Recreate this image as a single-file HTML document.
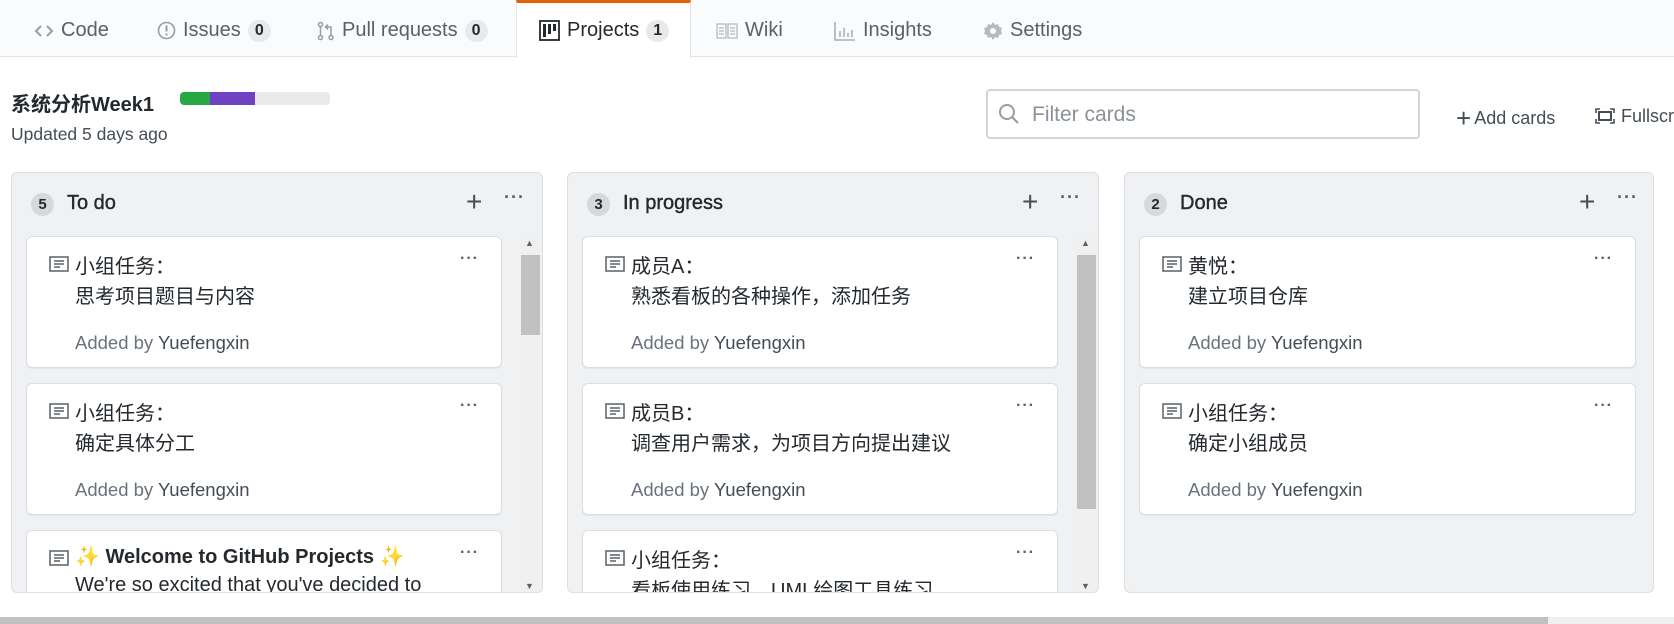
<!DOCTYPE html>
<html><head><meta charset="utf-8"><style>
*{box-sizing:border-box;margin:0;padding:0}
body{width:1674px;height:624px;overflow:hidden;background:#fff;font-family:"Liberation Sans","Noto Sans CJK SC",sans-serif;color:#24292e;position:relative}
.abs{position:absolute}
.tabbar{left:0;top:0;width:1674px;height:57px;background:#fafbfc;border-bottom:1px solid #e1e4e8}
.tab{position:absolute;top:2px;height:57px;display:flex;align-items:center;font-size:20px;color:#586069;white-space:nowrap}
.tab svg{margin-right:7px}
.cnt{display:inline-block;background:#e8e9ea;border-radius:12px;font-size:16px;padding:2px 7px;margin-left:7px;color:#24292e;font-weight:bold}
.ptab{left:516px;top:0;width:175px;height:58px;background:#fff;border:1px solid #e1e4e8;border-top:3px solid #e36209;border-bottom:none;padding-left:22px;color:#24292e}
.col{position:absolute;top:172px;width:532px;height:421px;background:#eff1f3;border:1px solid #dcdfe3;border-radius:6px;overflow:hidden}
.badge{position:absolute;left:19px;top:20px;width:23px;height:23px;border-radius:50%;background:#d6d9dc;font-size:15px;font-weight:bold;text-align:center;line-height:23px;color:#24292e}
.ctitle{position:absolute;left:55px;top:19px;font-size:20px;color:#24292e;-webkit-text-stroke:0.4px #24292e}
.plus{position:absolute;top:16px;font-size:28px;color:#444d56;line-height:26px}
.dots{position:absolute;top:14px;font-size:18px;color:#586069;letter-spacing:1px;font-weight:bold}
.card{position:absolute;left:14px;width:476px;height:132px;background:#fff;border:1px solid #dadde1;border-radius:6px;box-shadow:0 1px 1px rgba(0,0,0,.05)}
.card svg{position:absolute;left:22px;top:19px}
.t1{position:absolute;left:48px;top:13px;font-size:20px;color:#24292e}
.t2{position:absolute;left:48px;top:43px;font-size:20px;color:#24292e}
.by{position:absolute;left:48px;top:95px;font-size:18.5px;color:#6a737d}
.by b{font-weight:normal;color:#444d56}
.cd{position:absolute;right:22px;top:13px;font-size:16px;color:#586069;font-weight:bold;letter-spacing:1px}
.sb{position:absolute;width:21px;top:65px;height:353px;background:#f0f0f0}
.thumb{position:absolute;left:1px;width:19px;background:#c1c1c1}
</style></head><body>
<div class="abs tabbar"></div>
<div class="tab" style="left:34px"><svg width="20" height="16" viewBox="0 0 20 16"><path d="M7 3L2 8l5 5M13 3l5 5-5 5" fill="none" stroke="#959da5" stroke-width="2"/></svg>Code</div>
<div class="tab" style="left:157px"><svg width="19" height="19" viewBox="0 0 19 19"><circle cx="9.5" cy="9.5" r="8" fill="none" stroke="#959da5" stroke-width="1.6"/><path d="M9.5 4.5v6M9.5 12.5v2" stroke="#959da5" stroke-width="2"/></svg>Issues<span class="cnt">0</span></div>
<div class="tab" style="left:317px"><svg width="18" height="20" viewBox="0 0 18 20"><circle cx="3.5" cy="3.5" r="2" fill="none" stroke="#959da5" stroke-width="1.5"/><circle cx="3.5" cy="16.5" r="2" fill="none" stroke="#959da5" stroke-width="1.5"/><circle cx="14" cy="16.5" r="2" fill="none" stroke="#959da5" stroke-width="1.5"/><path d="M3.5 5.5v9M14 14.5V6H9M11 3.5L8.5 6 11 8.5" fill="none" stroke="#959da5" stroke-width="1.5"/></svg>Pull requests<span class="cnt">0</span></div>
<div class="tab ptab"><svg width="21" height="21" viewBox="0 0 21 21"><rect x="1" y="1" width="19" height="19" fill="none" stroke="#24292e" stroke-width="1.8"/><rect x="4" y="4" width="3" height="13" fill="#24292e"/><rect x="9" y="4" width="3" height="10" fill="#24292e"/><rect x="14" y="4" width="3" height="7" fill="#24292e"/></svg>Projects<span class="cnt">1</span></div>
<div class="tab" style="left:716px"><svg width="22" height="16" viewBox="0 0 22 16"><path d="M1 1h9v14H1zM12 1h9v14h-9zM3 5h5M3 8h5M3 11h5M14 5h5M14 8h5M14 11h5" fill="none" stroke="#b5bac0" stroke-width="1.3"/></svg>Wiki</div>
<div class="tab" style="left:834px"><svg width="22" height="20" viewBox="0 0 22 20"><path d="M1 1v18h20M6 16v-6M10 16V7M14 16v-4M18 16V9" fill="none" stroke="#b5bac0" stroke-width="1.8"/></svg>Insights</div>
<div class="tab" style="left:983px"><svg width="20" height="20" viewBox="0 0 20 20"><path d="M10 1l2 3 3-1 1 3 3 1-1 3 1 3-3 1-1 3-3-1-2 3-2-3-3 1-1-3-3-1 1-3-1-3 3-1 1-3 3 1z" fill="#b5bac0"/><circle cx="10" cy="10" r="3" fill="#fafbfc"/></svg>Settings</div>

<div class="abs" style="left:11px;top:88px;font-size:20px;font-weight:bold">系统分析Week1</div>
<div class="abs" style="left:180px;top:92px;width:150px;height:13px;background:#e9eaec;border-radius:4px;overflow:hidden"><div style="position:absolute;left:0;width:30px;height:13px;background:#28a745"></div><div style="position:absolute;left:30px;width:45px;height:13px;background:#6f42c1"></div></div>
<div class="abs" style="left:11px;top:124px;font-size:17.5px;color:#444d56">Updated 5 days ago</div>

<div class="abs" style="left:986px;top:89px;width:434px;height:50px;border:2px solid #d1d5da;border-radius:4px"><svg style="position:absolute;left:10px;top:12px" width="22" height="22" viewBox="0 0 22 22"><circle cx="9" cy="9" r="7" fill="none" stroke="#959da5" stroke-width="2"/><path d="M14 14l6 6" stroke="#959da5" stroke-width="2.2"/></svg><span style="position:absolute;left:44px;top:12px;font-size:21px;color:#8a9199">Filter cards</span></div>
<div class="abs" style="left:1456px;top:103px;font-size:18px;color:#444d56"><span style="font-size:26px;vertical-align:-3px;margin-right:3px">+</span>Add cards</div>
<div class="abs" style="left:1595px;top:106px;font-size:18px;color:#444d56;white-space:nowrap"><svg width="20" height="16" viewBox="0 0 20 16" style="vertical-align:-2px;margin-right:6px"><path d="M1 5V1h4M15 1h4v4M19 11v4h-4M5 15H1v-4" fill="none" stroke="#444d56" stroke-width="1.6"/><rect x="4" y="4" width="12" height="8" fill="none" stroke="#444d56" stroke-width="2"/></svg>Fullscreen</div>

<!-- col 1 -->
<div class="col" style="left:11px">
<div class="badge">5</div><div class="ctitle">To do</div><div class="plus" style="left:454px">+</div><div class="dots" style="left:492px">···</div>
<div class="card" style="top:63px"><svg width="20" height="16" viewBox="0 0 20 16"><rect x="1" y="1" width="18" height="14" fill="none" stroke="#586069" stroke-width="1.5"/><path d="M5 5h10M5 8h10M5 11h6" stroke="#586069" stroke-width="1.5"/></svg><div class="t1">小组任务：</div><div class="t2">思考项目题目与内容</div><div class="by">Added by <b>Yuefengxin</b></div><div class="cd">···</div></div>
<div class="card" style="top:210px"><svg width="20" height="16" viewBox="0 0 20 16"><rect x="1" y="1" width="18" height="14" fill="none" stroke="#586069" stroke-width="1.5"/><path d="M5 5h10M5 8h10M5 11h6" stroke="#586069" stroke-width="1.5"/></svg><div class="t1">小组任务：</div><div class="t2">确定具体分工</div><div class="by">Added by <b>Yuefengxin</b></div><div class="cd">···</div></div>
<div class="card" style="top:357px"><svg width="20" height="16" viewBox="0 0 20 16"><rect x="1" y="1" width="18" height="14" fill="none" stroke="#586069" stroke-width="1.5"/><path d="M5 5h10M5 8h10M5 11h6" stroke="#586069" stroke-width="1.5"/></svg><div class="t1" style="font-weight:bold"><span style="color:#e8b900">✨</span> Welcome to GitHub Projects <span style="color:#e8b900">✨</span></div><div class="t2">We're so excited that you've decided to</div><div class="cd">···</div></div>
<div class="sb" style="left:508px"><div class="thumb" style="top:17px;height:80px"></div><div style="position:absolute;left:5px;top:0;font-size:9px;color:#606060">▲</div><div style="position:absolute;left:5px;bottom:0;font-size:9px;color:#606060">▼</div></div>
</div>

<!-- col 2 -->
<div class="col" style="left:567px">
<div class="badge">3</div><div class="ctitle">In progress</div><div class="plus" style="left:454px">+</div><div class="dots" style="left:492px">···</div>
<div class="card" style="top:63px"><svg width="20" height="16" viewBox="0 0 20 16"><rect x="1" y="1" width="18" height="14" fill="none" stroke="#586069" stroke-width="1.5"/><path d="M5 5h10M5 8h10M5 11h6" stroke="#586069" stroke-width="1.5"/></svg><div class="t1">成员A：</div><div class="t2">熟悉看板的各种操作，添加任务</div><div class="by">Added by <b>Yuefengxin</b></div><div class="cd">···</div></div>
<div class="card" style="top:210px"><svg width="20" height="16" viewBox="0 0 20 16"><rect x="1" y="1" width="18" height="14" fill="none" stroke="#586069" stroke-width="1.5"/><path d="M5 5h10M5 8h10M5 11h6" stroke="#586069" stroke-width="1.5"/></svg><div class="t1">成员B：</div><div class="t2">调查用户需求，为项目方向提出建议</div><div class="by">Added by <b>Yuefengxin</b></div><div class="cd">···</div></div>
<div class="card" style="top:357px"><svg width="20" height="16" viewBox="0 0 20 16"><rect x="1" y="1" width="18" height="14" fill="none" stroke="#586069" stroke-width="1.5"/><path d="M5 5h10M5 8h10M5 11h6" stroke="#586069" stroke-width="1.5"/></svg><div class="t1">小组任务：</div><div class="t2">看板使用练习，UML绘图工具练习</div><div class="cd">···</div></div>
<div class="sb" style="left:508px"><div class="thumb" style="top:17px;height:254px"></div><div style="position:absolute;left:5px;top:0;font-size:9px;color:#606060">▲</div><div style="position:absolute;left:5px;bottom:0;font-size:9px;color:#606060">▼</div></div>
</div>

<!-- col 3 -->
<div class="col" style="left:1124px;width:530px">
<div class="badge">2</div><div class="ctitle">Done</div><div class="plus" style="left:454px">+</div><div class="dots" style="left:492px">···</div>
<div class="card" style="top:63px;width:497px"><svg width="20" height="16" viewBox="0 0 20 16"><rect x="1" y="1" width="18" height="14" fill="none" stroke="#586069" stroke-width="1.5"/><path d="M5 5h10M5 8h10M5 11h6" stroke="#586069" stroke-width="1.5"/></svg><div class="t1">黄悦：</div><div class="t2">建立项目仓库</div><div class="by">Added by <b>Yuefengxin</b></div><div class="cd">···</div></div>
<div class="card" style="top:210px;width:497px"><svg width="20" height="16" viewBox="0 0 20 16"><rect x="1" y="1" width="18" height="14" fill="none" stroke="#586069" stroke-width="1.5"/><path d="M5 5h10M5 8h10M5 11h6" stroke="#586069" stroke-width="1.5"/></svg><div class="t1">小组任务：</div><div class="t2">确定小组成员</div><div class="by">Added by <b>Yuefengxin</b></div><div class="cd">···</div></div>
</div>

<div class="abs" style="left:0;top:617px;width:1674px;height:7px;background:#f0f0f0"><div style="width:1548px;height:7px;background:#c1c1c1"></div></div>
</body></html>
